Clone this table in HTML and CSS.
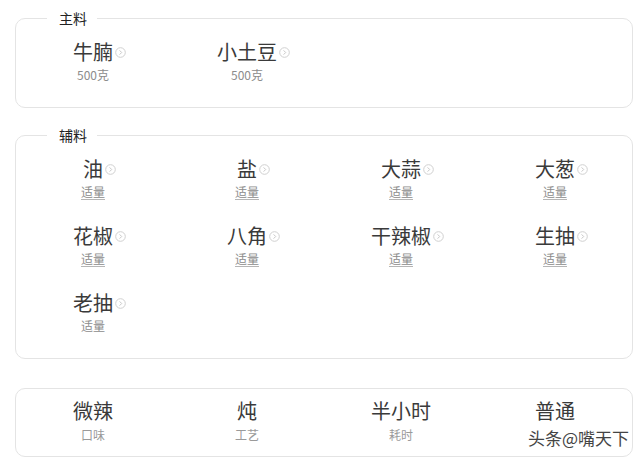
FILE: index.html
```html
<!DOCTYPE html>
<html lang="zh-CN">
<head>
<meta charset="utf-8">
<title>食材</title>
<link rel="stylesheet" href="styles.css">
</head>
<body>
<div class="page">
  <fieldset class="card card-main">
    <legend>主料</legend>
    <div class="grid">
      <div class="item"><span class="name">牛腩<svg class="icon" viewBox="0 0 11 11"><circle cx="5.5" cy="5.5" r="4.8" fill="none" stroke="#d0d0d0" stroke-width="1"/><path d="M4.6 3.4 L6.7 5.5 L4.6 7.6" fill="none" stroke="#c8c8c8" stroke-width="1"/></svg></span><span class="amt">500克</span></div>
      <div class="item"><span class="name">小土豆<svg class="icon" viewBox="0 0 11 11"><circle cx="5.5" cy="5.5" r="4.8" fill="none" stroke="#d0d0d0" stroke-width="1"/><path d="M4.6 3.4 L6.7 5.5 L4.6 7.6" fill="none" stroke="#c8c8c8" stroke-width="1"/></svg></span><span class="amt">500克</span></div>
    </div>
  </fieldset>

  <fieldset class="card card-sub">
    <legend>辅料</legend>
    <div class="grid">
      <div class="item"><span class="name">油<svg class="icon" viewBox="0 0 11 11"><circle cx="5.5" cy="5.5" r="4.8" fill="none" stroke="#d0d0d0" stroke-width="1"/><path d="M4.6 3.4 L6.7 5.5 L4.6 7.6" fill="none" stroke="#c8c8c8" stroke-width="1"/></svg></span><span class="amt link">适量</span></div>
      <div class="item"><span class="name">盐<svg class="icon" viewBox="0 0 11 11"><circle cx="5.5" cy="5.5" r="4.8" fill="none" stroke="#d0d0d0" stroke-width="1"/><path d="M4.6 3.4 L6.7 5.5 L4.6 7.6" fill="none" stroke="#c8c8c8" stroke-width="1"/></svg></span><span class="amt link">适量</span></div>
      <div class="item"><span class="name">大蒜<svg class="icon" viewBox="0 0 11 11"><circle cx="5.5" cy="5.5" r="4.8" fill="none" stroke="#d0d0d0" stroke-width="1"/><path d="M4.6 3.4 L6.7 5.5 L4.6 7.6" fill="none" stroke="#c8c8c8" stroke-width="1"/></svg></span><span class="amt link">适量</span></div>
      <div class="item"><span class="name">大葱<svg class="icon" viewBox="0 0 11 11"><circle cx="5.5" cy="5.5" r="4.8" fill="none" stroke="#d0d0d0" stroke-width="1"/><path d="M4.6 3.4 L6.7 5.5 L4.6 7.6" fill="none" stroke="#c8c8c8" stroke-width="1"/></svg></span><span class="amt link">适量</span></div>
      <div class="item"><span class="name">花椒<svg class="icon" viewBox="0 0 11 11"><circle cx="5.5" cy="5.5" r="4.8" fill="none" stroke="#d0d0d0" stroke-width="1"/><path d="M4.6 3.4 L6.7 5.5 L4.6 7.6" fill="none" stroke="#c8c8c8" stroke-width="1"/></svg></span><span class="amt link">适量</span></div>
      <div class="item"><span class="name">八角<svg class="icon" viewBox="0 0 11 11"><circle cx="5.5" cy="5.5" r="4.8" fill="none" stroke="#d0d0d0" stroke-width="1"/><path d="M4.6 3.4 L6.7 5.5 L4.6 7.6" fill="none" stroke="#c8c8c8" stroke-width="1"/></svg></span><span class="amt link">适量</span></div>
      <div class="item"><span class="name">干辣椒<svg class="icon" viewBox="0 0 11 11"><circle cx="5.5" cy="5.5" r="4.8" fill="none" stroke="#d0d0d0" stroke-width="1"/><path d="M4.6 3.4 L6.7 5.5 L4.6 7.6" fill="none" stroke="#c8c8c8" stroke-width="1"/></svg></span><span class="amt link">适量</span></div>
      <div class="item"><span class="name">生抽<svg class="icon" viewBox="0 0 11 11"><circle cx="5.5" cy="5.5" r="4.8" fill="none" stroke="#d0d0d0" stroke-width="1"/><path d="M4.6 3.4 L6.7 5.5 L4.6 7.6" fill="none" stroke="#c8c8c8" stroke-width="1"/></svg></span><span class="amt link">适量</span></div>
      <div class="item"><span class="name">老抽<svg class="icon" viewBox="0 0 11 11"><circle cx="5.5" cy="5.5" r="4.8" fill="none" stroke="#d0d0d0" stroke-width="1"/><path d="M4.6 3.4 L6.7 5.5 L4.6 7.6" fill="none" stroke="#c8c8c8" stroke-width="1"/></svg></span><span class="amt">适量</span></div>
    </div>
  </fieldset>

  <div class="card card-info">
    <div class="grid">
      <div class="item"><span class="name">微辣</span><span class="amt light">口味</span></div>
      <div class="item"><span class="name">炖</span><span class="amt light">工艺</span></div>
      <div class="item"><span class="name">半小时</span><span class="amt light">耗时</span></div>
      <div class="item"><span class="name">普通</span><span class="amt light"></span></div>
    </div>
  </div>
</div>
<div class="watermark">头条@嘴天下</div>
</body>
</html>
```

FILE: styles.css
```css
html, body {
  margin: 0;
  padding: 0;
  background: #fff;
}

body {
  font-family: "Noto Sans CJK SC", "Noto Sans", sans-serif;
  color: #333;
  position: relative;
  min-height: 461px;
}

.page {
  display: flex;
  flex-direction: column;
  padding: 10px 7px 0 15px;
}

.card {
  margin: 0;
  border: 1px solid #e4e4e4;
  border-radius: 10px;
  min-width: 0;
}

fieldset.card {
  padding: 14px 0 24px;
}

.card legend {
  margin-left: 31px;
  padding: 0 10px 0 12px;
  font-size: 14px;
  line-height: 16px;
  color: #222;
}

.card-main {
  margin-bottom: 19px;
}

.card-sub {
  margin-bottom: 29px;
}

.card-info {
  padding: 10px 0 13px;
}

.grid {
  display: grid;
  grid-template-columns: repeat(4, 1fr);
  row-gap: 24px;
}

.item {
  display: flex;
  flex-direction: column;
  align-items: center;
}

.name {
  position: relative;
  font-size: 20px;
  line-height: 24px;
  color: #3a3a3a;
}

.icon {
  position: absolute;
  left: calc(100% + 2px);
  top: 7px;
  width: 11px;
  height: 11px;
}

.amt {
  margin-top: 3px;
  min-height: 16px;
  font-size: 12px;
  line-height: 16px;
  color: #8c8c8c;
}

.amt.link {
  text-decoration: underline;
  text-decoration-color: #b5b5b5;
  text-underline-offset: 2px;
}

.amt.light {
  margin-top: 4px;
  color: #9a9a9a;
}

.watermark {
  position: absolute;
  left: 526px;
  top: 427px;
  font-size: 17px;
  line-height: 22px;
  color: #444;
  background: #fff;
  padding: 0 2px;
  text-shadow: 0 0 2px #fff;
}
```
